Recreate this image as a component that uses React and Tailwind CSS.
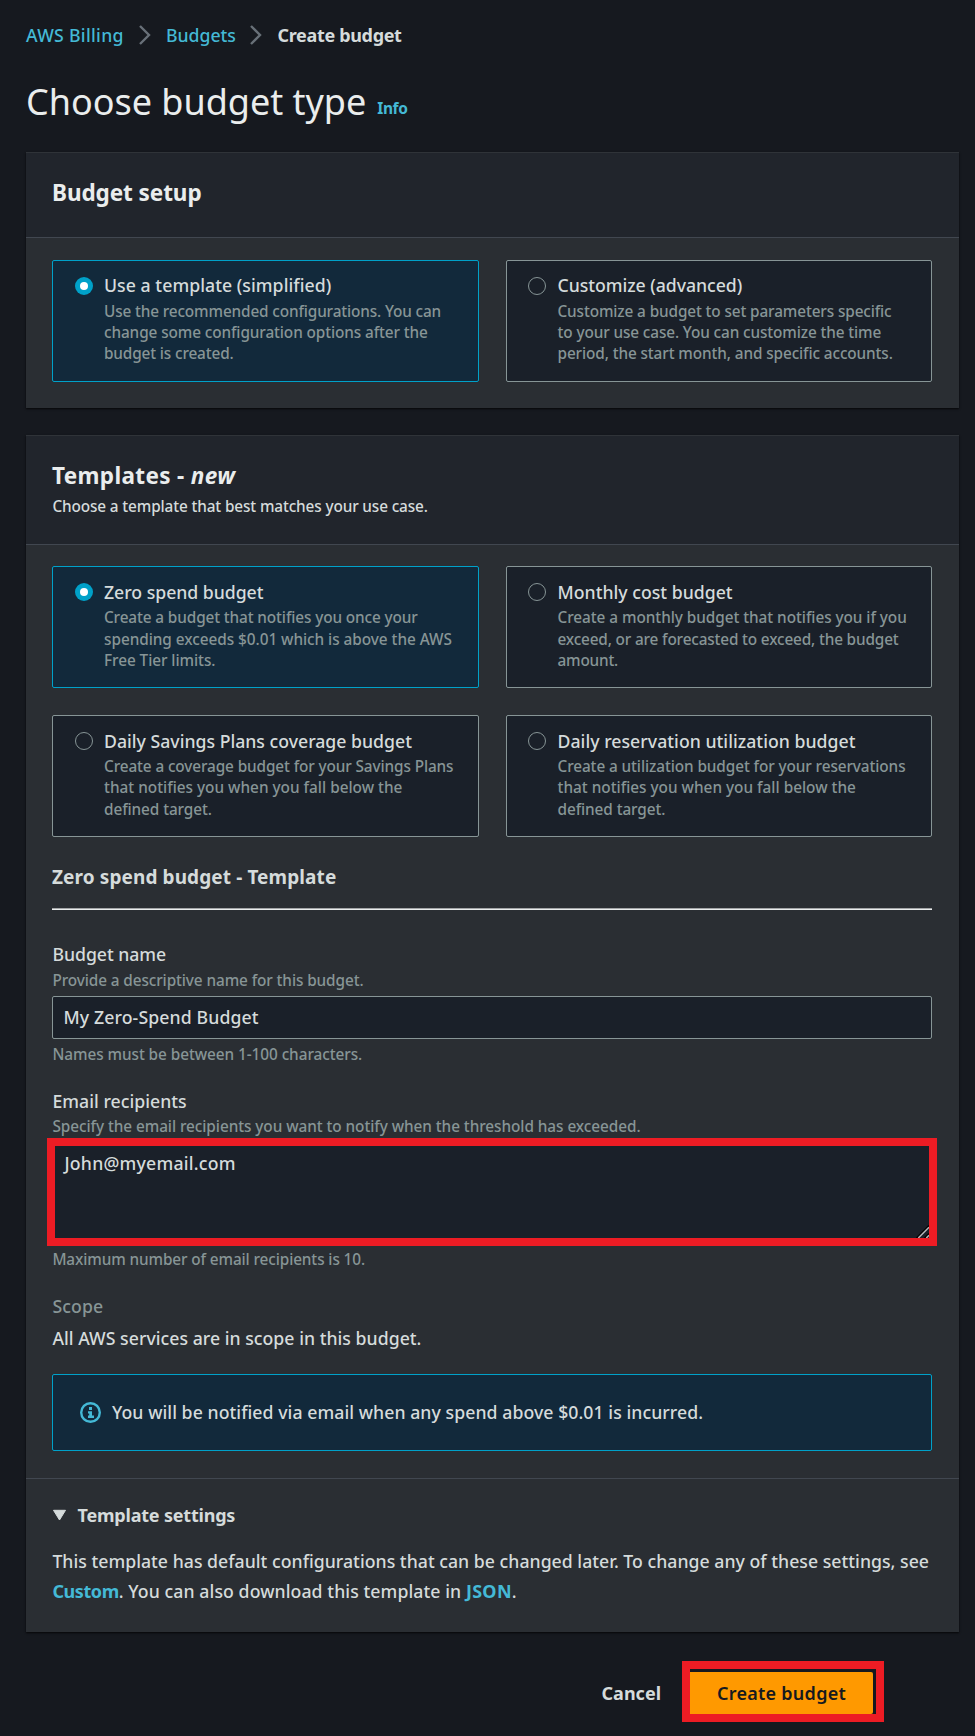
import React from "react";

const setupOptions = [
  {
    title: "Use a template (simplified)",
    tracking: "tracking-[0.05px]",
    selected: true,
    lines: [
      ["Use the recommended configurations. You can", "tracking-[-0.139px]"],
      ["change some configuration options after the", "tracking-[-0.105px]"],
      ["budget is created.", "tracking-[-0.142px]"],
    ],
  },
  {
    title: "Customize (advanced)",
    tracking: "tracking-[-0.04px]",
    lines: [
      ["Customize a budget to set parameters specific", "tracking-[-0.125px]"],
      ["to your use case. You can customize the time", "tracking-[-0.116px]"],
      ["period, the start month, and specific accounts.", "tracking-[-0.11px]"],
    ],
  },
];

const templateOptions = [
  {
    title: "Zero spend budget",
    tracking: "tracking-[-0.03px]",
    selected: true,
    lines: [
      ["Create a budget that notifies you once your", "tracking-[-0.122px]"],
      ["spending exceeds $0.01 which is above the AWS", "tracking-[-0.043px]"],
      ["Free Tier limits.", "tracking-[-0.06px]"],
    ],
  },
  {
    title: "Monthly cost budget",
    tracking: "tracking-[0.01px]",
    lines: [
      ["Create a monthly budget that notifies you if you", "tracking-[-0.055px]"],
      ["exceed, or are forecasted to exceed, the budget", "tracking-[-0.16px]"],
      ["amount.", "tracking-[-0.2px]"],
    ],
  },
  {
    title: "Daily Savings Plans coverage budget",
    tracking: "tracking-normal",
    lines: [
      ["Create a coverage budget for your Savings Plans", "tracking-[-0.115px]"],
      ["that notifies you when you fall below the", "tracking-normal"],
      ["defined target.", "tracking-[-0.093px]"],
    ],
  },
  {
    title: "Daily reservation utilization budget",
    tracking: "tracking-[0.03px]",
    lines: [
      ["Create a utilization budget for your reservations", "tracking-[-0.098px]"],
      ["that notifies you when you fall below the", "tracking-normal"],
      ["defined target.", "tracking-[-0.093px]"],
    ],
  },
];

function Chevron() {
  return (
    <svg width="12" height="20" viewBox="0 0 12 20" fill="none" stroke="#687078" strokeWidth="2.4">
      <path d="M1 1L10 10L1 19" />
    </svg>
  );
}

function Radio({ selected }) {
  return selected ? (
    <span className="mt-4 flex size-[18px] shrink-0 items-center justify-center rounded-full bg-[#00a1c9]">
      <span className="size-2 rounded-full bg-white" />
    </span>
  ) : (
    <span className="mt-4 size-[18px] shrink-0 rounded-full border border-[#879596] bg-[#1a2029]" />
  );
}

function Tile({ option, titleClass, descClass }) {
  const tone = option.selected ? "border-[#00a1c9] bg-[#12293b]" : "border-[#879596] bg-[#1a2029]";
  return (
    <label
      className={
        "flex h-[122px] gap-[11px] rounded-[2px] border pl-[22px] even:gap-[11.5px] even:pl-[21px] " + tone
      }
    >
      <Radio selected={option.selected} />
      <span className={"block " + titleClass}>
        <span className={"block leading-[30px] whitespace-nowrap " + option.tracking}>{option.title}</span>
        <span className={"block text-[15.35px] text-[#879596] " + descClass}>
          {option.lines.map(([text, tracking]) => (
            <span key={text} className={"block whitespace-nowrap " + tracking}>
              {text}
            </span>
          ))}
        </span>
      </span>
    </label>
  );
}

const panel = "border-t border-[#2f3338] bg-[#2a2e33] shadow-[0_1px_2px_0_rgba(0,0,0,0.8)]";
const hint = "text-[15.35px] leading-[21px] text-[#879596] whitespace-nowrap pl-[0.4px] ";

export default function App() {
  return (
    <div className="min-h-[1736px] bg-[#16191f] pt-5 pr-4 pl-[26px] font-['Noto_Sans',sans-serif] text-[17.68px] leading-[30px] font-medium text-[#d5dbdb]">
      <nav className="flex h-[30px] items-center whitespace-nowrap">
        <a className="w-[112.5px] tracking-[0.3px] text-[#44b9d6]">AWS Billing</a>
        <Chevron />
        <a className="ml-[15.5px] w-[83.5px] tracking-[-0.02px] text-[#44b9d6]">Budgets</a>
        <Chevron />
        <span className="ml-4 text-[18px] font-bold tracking-[-0.33px]">Create budget</span>
      </nav>

      <div className="mt-[30px] flex items-baseline text-[#eaeded]">
        <h1 className="text-[36px] leading-[44px] font-normal tracking-[-0.02px] whitespace-nowrap">Choose budget type</h1>
        <a className="relative -top-px ml-[11px] text-[15.5px] leading-[22px] font-bold tracking-[-0.4px] text-[#44b9d6]">Info</a>
      </div>

      <section className={"mt-[28px] " + panel}>
        <div className="h-[85px] border-b border-[#414750] bg-[#21252c] px-[26px] pt-[25px]">
          <h2 className="text-[22.5px] leading-[30px] font-bold tracking-[-0.07px] text-[#eaeded]">Budget setup</h2>
        </div>
        <div className="grid grid-cols-[427px_426px] gap-[27px] px-[26px] pt-[22px] pb-[26px]">
          {setupOptions.map((o) => (
            <Tile key={o.title} option={o} titleClass="pt-[9px]" descClass="mt-px leading-[21.2px]" />
          ))}
        </div>
      </section>

      <section className={"mt-[27px] " + panel}>
        <div className="h-[109px] border-b border-[#414750] bg-[#21252c] px-[26px] pt-[25px]">
          <h2 className="text-[22.5px] leading-[30px] font-bold whitespace-nowrap text-[#eaeded]">
            <span className="tracking-[0.35px]">Templates - </span>
            <em className="tracking-[0.4px]">new</em>
          </h2>
          <p className="mt-1 pl-[0.4px] text-[15.35px] leading-[22px] tracking-[-0.133px]">
            Choose a template that best matches your use case.
          </p>
        </div>

        <div className="pt-[21px] pr-[27px] pl-[26px]">
          <div className="grid grid-cols-[427px_426px] gap-[27px]">
            {templateOptions.map((o, i) => (
              <Tile
                key={o.title}
                option={o}
                titleClass="pt-[10px]"
                descClass={i < 2 ? "mt-[0.3px] leading-[21.3px]" : "mt-[0.2px] leading-[21.2px]"}
              />
            ))}
          </div>

          <h3 className="mt-[25px] text-[19px] font-bold tracking-[0.1px]">Zero spend budget - Template</h3>
          <div className="mt-4 h-[2px] border-t border-[#a3a5a7] bg-[#eaeded]" />

          <div className="mt-[29px]">
            <label className="block pl-[0.4px] tracking-[-0.03px]">Budget name</label>
            <p className={hint + "mt-px tracking-[-0.101px]"}>Provide a descriptive name for this budget.</p>
            <div className="mt-[5px] flex h-[43px] items-center rounded-[2px] border border-[#879596] bg-[#1a2029] px-[10.5px] pb-px tracking-[0.11px]">
              My Zero-Spend Budget
            </div>
            <p className={hint + "mt-[5px] tracking-[-0.065px]"}>Names must be between 1-100 characters.</p>
          </div>

          <div className="mt-[21px]">
            <label className="block pl-[0.4px] tracking-[0.03px]">Email recipients</label>
            <p className={hint + "tracking-[-0.063px]"}>
              Specify the email recipients you want to notify when the threshold has exceeded.
            </p>
            <div className="relative -mx-[5px] mt-px h-[108px] border-8 border-[#ed1c24] bg-[#1a2029] pt-[2px] pl-[9.5px] tracking-[0.22px]">
              John@myemail.com
              <svg className="absolute right-0 bottom-0" width="13" height="13" viewBox="0 0 13 13" fill="none">
                <path d="M0.5 13L13 0.5M8.5 13L13 8.5" stroke="#000" strokeWidth="1.4" />
                <path d="M2.3 13L13 2.3M10.3 13L13 10.3" stroke="#b5b7ba" strokeWidth="1.5" />
              </svg>
            </div>
            <p className={hint + "mt-[3px] tracking-[-0.112px]"}>Maximum number of email recipients is 10.</p>
          </div>

          <div className="mt-[21px]">
            <div className="pl-[0.4px] tracking-[0.13px] text-[#879596]">Scope</div>
            <div className="mt-[2px] pl-[0.4px] tracking-[0.025px]">All AWS services are in scope in this budget.</div>
          </div>

          <div className="mt-[21px] flex h-[77px] items-center rounded-[2px] border border-[#00a1c9] bg-[#12293b] pl-[27px]">
            <svg width="21" height="21" viewBox="0 0 21 21" fill="none">
              <circle cx="10.5" cy="10.5" r="9.3" stroke="#44b9d6" strokeWidth="2.4" />
              <path d="M9 5H12V8H9ZM8 9.3H12V13.6H14V16H8V13.6H9.2V11.5H8Z" fill="#44b9d6" />
            </svg>
            <span className="ml-[11px] pb-[2px] tracking-[0.06px] whitespace-nowrap">
              You will be notified via email when any spend above $0.01 is incurred.
            </span>
          </div>
        </div>

        <div className="mt-[27px] border-t border-[#414750] px-[26px] pt-[21px] pb-[26px]">
          <div className="flex items-center">
            <svg width="15" height="12" viewBox="0 0 15 12">
              <path d="M1.5 1.3H13.5L7.5 11Z" fill="#d5dbdb" stroke="#d5dbdb" strokeLinejoin="round" />
            </svg>
            <h3 className="ml-[10.5px] text-[18px] font-bold tracking-[-0.2px]">Template settings</h3>
          </div>
          <p className="mt-4 pl-[0.4px] whitespace-nowrap">
            <span className="tracking-[0.022px]">
              This template has default configurations that can be changed later. To change any of these settings, see
            </span>
            <br />
            <a className="text-[18px] font-bold tracking-[-0.42px] text-[#44b9d6]">Custom</a>
            <span className="tracking-[0.08px]">. You can also download this template in </span>
            <a className="text-[18px] font-bold tracking-[0.29px] text-[#44b9d6]">JSON</a>.
          </p>
        </div>
      </section>

      <div className="mt-[29px] flex h-[61px] items-center justify-end pr-[75px]">
        <button className="mt-[2px] mr-[21px] text-[18px] font-bold">Cancel</button>
        <div className="h-[61px] w-[202px] border-8 border-[#ed1c24] pt-[3px]">
          <button className="flex h-[42px] w-[183px] items-center justify-center rounded-r-[2px] bg-[#ff9900] pb-px text-[18px] font-semibold tracking-[0.27px] text-[#16191f]">
            Create budget
          </button>
        </div>
      </div>
    </div>
  );
}
